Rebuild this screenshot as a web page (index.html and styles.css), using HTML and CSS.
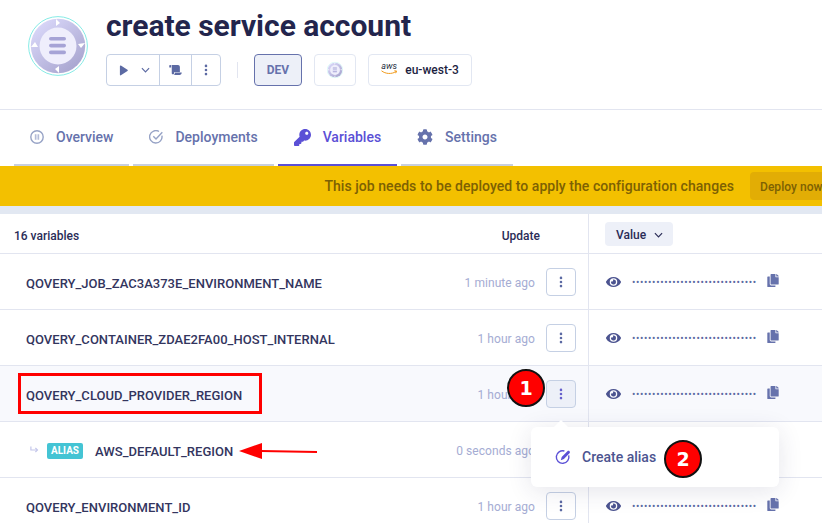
FILE: index.html
```html
<!DOCTYPE html>
<html lang="en">
<head>
  <meta charset="UTF-8">
  <meta name="viewport" content="width=device-width, initial-scale=1.0">
  <title>create service account</title>
  <link rel="stylesheet" href="styles.css">
</head>
<body>
  <svg class="defs" width="0" height="0" aria-hidden="true">
    <defs>
      <linearGradient id="ring" x1="0.15" y1="0.1" x2="0.85" y2="0.9">
        <stop offset="0" stop-color="#d8d6f8"/>
        <stop offset="1" stop-color="#a9a6d0"/>
      </linearGradient>
      <symbol id="logo" viewBox="0 0 60 60">
        <circle cx="30" cy="30" r="29.4" fill="#fff" stroke="#86ebe6" stroke-width="1"/>
        <circle cx="30" cy="30" r="27.2" fill="url(#ring)"/>
        <circle cx="30" cy="30" r="18.5" fill="#efeefc"/>
        <rect x="21" y="21" width="17" height="3.6" rx="1.8" fill="#a6a3d6"/>
        <rect x="21" y="27.8" width="17" height="3.6" rx="1.8" fill="#a6a3d6"/>
        <rect x="21" y="34.6" width="17" height="3.6" rx="1.8" fill="#a6a3d6"/>
        <path d="M28 3l4 4-4 3zM57 27l-4 5-3-4zM31 57l-4-4 4-3zM3 31l4-5 3 5z" fill="#fff"/>
      </symbol>
      <symbol id="key" viewBox="0 0 512 512"><path d="M512 176.001C512 273.203 433.202 352 336 352c-11.22 0-22.19-1.062-32.827-3.069l-24.012 27.014A23.999 23.999 0 0 1 261.223 384H224v40c0 13.255-10.745 24-24 24h-40v40c0 13.255-10.745 24-24 24H24c-13.255 0-24-10.745-24-24v-78.059c0-6.365 2.529-12.47 7.029-16.971l161.802-161.802C163.108 213.814 160 195.271 160 176 160 78.798 238.797.001 335.999 0 433.488-.001 512 78.511 512 176.001zM336 128c0 26.51 21.49 48 48 48s48-21.49 48-48-21.49-48-48-48-48 21.49-48 48z"/></symbol>
      <symbol id="cog" viewBox="0 0 512 512"><path d="M487.4 315.7l-42.6-24.6c4.3-23.2 4.3-47 0-70.2l42.6-24.6c4.9-2.8 7.1-8.6 5.5-14-11.1-35.6-30-67.8-54.7-94.6-3.8-4.1-10-5.1-14.8-2.3L380.8 110c-17.9-15.4-38.5-27.3-60.8-35.1V25.8c0-5.6-3.9-10.5-9.4-11.7-36.7-8.2-74.3-7.8-109.2 0-5.5 1.2-9.4 6.1-9.4 11.7V75c-22.2 7.9-42.8 19.8-60.8 35.1L88.7 85.5c-4.9-2.8-11-1.9-14.8 2.3-24.7 26.7-43.6 58.9-54.7 94.6-1.7 5.4.6 11.2 5.5 14L67.3 221c-4.3 23.2-4.3 47 0 70.2l-42.6 24.6c-4.9 2.8-7.1 8.6-5.5 14 11.1 35.6 30 67.8 54.7 94.6 3.8 4.1 10 5.1 14.8 2.3l42.6-24.6c17.9 15.4 38.5 27.3 60.8 35.1v49.2c0 5.6 3.9 10.5 9.4 11.7 36.7 8.2 74.3 7.8 109.2 0 5.5-1.2 9.4-6.1 9.4-11.7v-49.2c22.2-7.9 42.8-19.8 60.8-35.1l42.6 24.6c4.9 2.8 11 1.9 14.8-2.3 24.7-26.7 43.6-58.9 54.7-94.6 1.5-5.5-.7-11.3-5.6-14.1zM256 336c-44.1 0-80-35.9-80-80s35.9-80 80-80 80 35.9 80 80-35.9 80-80 80z"/></symbol>
      <symbol id="copy" viewBox="0 0 448 512"><path d="M320 448v40c0 13.255-10.745 24-24 24H24c-13.255 0-24-10.745-24-24V120c0-13.255 10.745-24 24-24h72v296c0 30.879 25.121 56 56 56h168zm0-344V0H152c-13.255 0-24 10.745-24 24v368c0 13.255 10.745 24 24 24h272c13.255 0 24-10.745 24-24V128H344c-13.2 0-24-10.8-24-24zm120.971-31.029L375.029 7.029A24 24 0 0 0 358.059 0H352v96h96v-6.059a24 24 0 0 0-7.029-16.97z"/></symbol>
      <symbol id="eye" viewBox="0 0 576 512"><path d="M572.52 241.4C518.29 135.59 410.93 64 288 64S57.68 135.64 3.48 241.41a32.35 32.35 0 0 0 0 29.19C57.71 376.41 165.07 448 288 448s230.32-71.64 284.52-177.41a32.35 32.35 0 0 0 0-29.19zM288 400a144 144 0 1 1 144-144 143.93 143.93 0 0 1-144 144zm0-240a95.31 95.31 0 0 0-25.31 3.79 47.85 47.85 0 0 1-66.9 66.9A95.78 95.78 0 1 0 288 160z"/></symbol>
      <symbol id="scroll" viewBox="0 0 640 512"><path d="M48 0C21.53 0 0 21.53 0 48v64c0 8.84 7.16 16 16 16h80V48C96 21.53 74.47 0 48 0zm208 412.57V352h288V96c0-52.94-43.06-96-96-96H111.59C121.74 13.41 128 29.92 128 48v368c0 38.87 34.65 69.65 74.84 63.12C234.44 474 256 444.46 256 412.57zM288 384v32c0 52.94-43.06 96-96 96h336c61.86 0 112-50.14 112-112 0-8.84-7.16-16-16-16H288z"/></symbol>
      <symbol id="kebab" viewBox="0 0 4 14">
        <circle cx="2" cy="2.200" r="1.500"/><circle cx="2" cy="7" r="1.500"/><circle cx="2" cy="11.800" r="1.500"/>
      </symbol>
    </defs>
  </svg>

  <div class="page">
    <header class="head">
      <svg class="logo"><use href="#logo"/></svg>
      <div class="head-main">
        <h1 class="title">create service account</h1>
        <div class="actions">
          <div class="btn-group">
            <span class="btn-cell cell-run">
              <svg class="ic-play" viewBox="0 0 10 12"><path d="M1 1.200c0-.6.6-1 1.100-.7l7.300 4.800c.5.300.5 1 0 1.300l-7.300 4.800c-.5.300-1.100-.1-1.100-.7z"/></svg>
              <svg class="ic-chev" viewBox="0 0 10 6"><path d="M1 1l4 4 4-4"/></svg>
            </span>
            <span class="btn-cell cell-log"><svg class="ic-scroll"><use href="#scroll"/></svg></span>
            <span class="btn-cell cell-more"><svg class="ic-kebab"><use href="#kebab"/></svg></span>
          </div>
          <span class="sep"></span>
          <span class="tag tag-dev">DEV</span>
          <span class="tag tag-status"><svg class="logo-small"><use href="#logo"/></svg></span>
          <span class="tag tag-region">
            <span class="aws">
              <span class="aws-word">aws</span>
              <svg class="aws-smile" viewBox="0 0 16 5"><path d="M.5 .8C4.500 4 10.500 4.400 15 1.600"/><path d="M13.300 .8l2.300 .2-.9 2.200"/></svg>
            </span>
            eu-west-3
          </span>
        </div>
      </div>
    </header>

    <nav class="tabs">
      <a class="tab">
        <svg class="tab-ic" viewBox="0 0 14 14"><circle cx="7" cy="7" r="6.200" fill="none" stroke="#97a3c6" stroke-width="1.400"/><path d="M4.800 4.300h1.700v5.400H4.800zM7.500 4.300h1.700v5.400H7.500z" fill="#b4bcd8"/></svg>
        Overview
      </a>
      <a class="tab">
        <svg class="tab-ic" viewBox="0 0 14 14"><path d="M12.900 5.600A6.200 6.200 0 1 1 10 1.500" fill="none" stroke="#97a3c6" stroke-width="1.400"/><path d="M4.300 6.300L7 9l6.300-6.800" fill="none" stroke="#97a3c6" stroke-width="1.400"/></svg>
        Deployments
      </a>
      <a class="tab tab-active">
        <svg class="tab-key"><use href="#key"/></svg>
        Variables
      </a>
      <a class="tab">
        <svg class="tab-cog"><use href="#cog"/></svg>
        Settings
      </a>
    </nav>

    <div class="banner">
      <span>This job needs to be deployed to apply the configuration changes</span>
      <span class="deploy">Deploy now</span>
    </div>
    <div class="band"></div>

    <section class="table">
      <div class="row row-head">
        <div class="cell-name">
          <span class="count">16 variables</span>
          <span class="update">Update</span>
        </div>
        <div class="cell-value">
          <span class="value-btn">Value <svg class="ic-chev" viewBox="0 0 10 6"><path d="M1 1l4 4 4-4"/></svg></span>
        </div>
      </div>

      <div class="row">
        <div class="cell-name">
          <span class="var">QOVERY_JOB_ZAC3A373E_ENVIRONMENT_NAME</span>
          <span class="time">1 minute ago</span>
          <span class="more"><svg class="ic-kebab"><use href="#kebab"/></svg></span>
        </div>
        <div class="cell-value">
          <svg class="ic-eye"><use href="#eye"/></svg>
          <span class="dots">•••••••••••••••••••••••••••••••</span>
          <svg class="ic-copy"><use href="#copy"/></svg>
        </div>
      </div>

      <div class="row">
        <div class="cell-name">
          <span class="var">QOVERY_CONTAINER_ZDAE2FA00_HOST_INTERNAL</span>
          <span class="time">1 hour ago</span>
          <span class="more"><svg class="ic-kebab"><use href="#kebab"/></svg></span>
        </div>
        <div class="cell-value">
          <svg class="ic-eye"><use href="#eye"/></svg>
          <span class="dots">•••••••••••••••••••••••••••••••</span>
          <svg class="ic-copy"><use href="#copy"/></svg>
        </div>
      </div>

      <div class="row row-hover">
        <div class="cell-name">
          <span class="var">QOVERY_CLOUD_PROVIDER_REGION</span>
          <span class="time">1 hour ago</span>
          <span class="more more-open"><svg class="ic-kebab"><use href="#kebab"/></svg></span>
        </div>
        <div class="cell-value">
          <svg class="ic-eye"><use href="#eye"/></svg>
          <span class="dots">•••••••••••••••••••••••••••••••</span>
          <svg class="ic-copy"><use href="#copy"/></svg>
        </div>
      </div>

      <div class="row">
        <div class="cell-name">
          <svg class="ic-sub" viewBox="0 0 10 8"><path d="M1 0v4h7"/><path d="M6 1.800L8.300 4 6 6.200"/></svg>
          <span class="alias">ALIAS</span>
          <span class="var">AWS_DEFAULT_REGION</span>
          <span class="time">0 seconds ago</span>
          <span class="more"><svg class="ic-kebab"><use href="#kebab"/></svg></span>
        </div>
        <div class="cell-value"></div>
      </div>

      <div class="row">
        <div class="cell-name">
          <span class="var">QOVERY_ENVIRONMENT_ID</span>
          <span class="time">1 hour ago</span>
          <span class="more"><svg class="ic-kebab"><use href="#kebab"/></svg></span>
        </div>
        <div class="cell-value">
          <svg class="ic-eye"><use href="#eye"/></svg>
          <span class="dots">•••••••••••••••••••••••••••••••</span>
          <svg class="ic-copy"><use href="#copy"/></svg>
        </div>
      </div>
    </section>

    <!-- dropdown from the row menu -->
    <div class="menu">
      <svg class="menu-ic" viewBox="0 0 16 16"><path d="M13.700 6.400A6.300 6.300 0 1 1 9.400 2" fill="none" stroke="#5b50d6" stroke-width="1.400"/><path d="M5.800 11.200l.9-3.300 5.700-5.700c.6-.6 1.500-.6 2.100 0s.6 1.500 0 2.100L8.900 10z" fill="#5b50d6"/></svg>
      Create alias
    </div>

    <!-- annotations drawn on top of the screenshot -->
    <div class="mark-box"></div>
    <svg class="mark-arrow" viewBox="0 0 80 18"><path d="M22 9L78 10" stroke="#f00" stroke-width="2" fill="none"/><path d="M0 9L23 1v16z" fill="#f00"/></svg>
    <span class="mark-num mark-1">1</span>
    <span class="mark-num mark-2">2</span>
  </div>
</body>
</html>
```

FILE: styles.css
```css
* {
  box-sizing: border-box;
}

html, body {
  margin: 0;
  height: 100%;
  overflow: hidden;
}

body {
  font-family: Roboto, "Liberation Sans", sans-serif;
  background: #fff;
  color: #2a2c57;
}

.defs {
  position: absolute;
}

.page {
  position: relative;
  width: 822px;
  height: 523px;
  overflow: hidden;
}

/* header */
.head {
  display: flex;
  height: 110px;
  padding: 16px 0 0 28px;
  border-bottom: 1px solid #e2e5f0;
}

.logo {
  width: 60px;
  height: 60px;
  flex-shrink: 0;
}

.head-main {
  margin: -8px 0 0 18px;
}

.title {
  margin: 0 0 10px;
  font-size: 30px;
  line-height: 36px;
  font-weight: 700;
  letter-spacing: -0.03px;
  color: #23254d;
}

.actions {
  display: flex;
  align-items: center;
}

.btn-group {
  display: flex;
  height: 32px;
  border: 1px solid #c5d0e4;
  border-radius: 4px;
}

.btn-cell {
  display: flex;
  align-items: center;
  justify-content: center;
  border-right: 1px solid #c5d0e4;
}

.btn-cell:last-child {
  border-right: 0;
}

.cell-run {
  width: 53px;
  gap: 13px;
  padding-left: 3px;
}

.cell-log {
  width: 32px;
}

.cell-more {
  width: 28px;
}

.ic-play {
  width: 9px;
  height: 11px;
  fill: #5c6aa3;
}

.ic-chev {
  width: 9px;
  height: 6px;
  fill: none;
  stroke: #5c6aa3;
  stroke-width: 1.300;
}

.ic-scroll {
  width: 13px;
  height: 10px;
  fill: #5c6aa3;
}

.ic-kebab {
  width: 4px;
  height: 12px;
  fill: #5c6aa3;
}

.sep {
  width: 1px;
  height: 16px;
  margin: 0 16px;
  background: #e2e5f0;
}

.tag {
  display: flex;
  align-items: center;
  justify-content: center;
  height: 32px;
  border: 1px solid #e2e7f2;
  border-radius: 4px;
  margin-right: 12px;
  font-size: 12px;
  font-weight: 500;
}

.tag-dev {
  width: 48px;
  border-color: #6672ac;
  background: #edf0f8;
  color: #6672ac;
  font-weight: 700;
}

.tag-status {
  width: 42px;
}

.logo-small {
  width: 16px;
  height: 16px;
}

.tag-region {
  width: 104px;
  gap: 8px;
  color: #1c1e3f;
}

.aws {
  display: flex;
  flex-direction: column;
  align-items: center;
  margin-top: -3px;
}

.aws-word {
  font-size: 9px;
  line-height: 8px;
  font-style: italic;
  font-weight: 400;
  color: #2b3346;
}

.aws-smile {
  width: 16px;
  height: 5px;
  fill: none;
  stroke: #f19a1a;
  stroke-width: 1;
}

/* tabs */
.tabs {
  display: flex;
  gap: 4px;
  height: 56px;
  padding-left: 14px;
}

.tab {
  display: flex;
  align-items: center;
  gap: 12px;
  padding: 0 16px;
  border-bottom: 2px solid #c8cfdf;
  font-size: 14px;
  font-weight: 500;
  color: #6672ac;
}

.tab-active {
  border-bottom-color: #5b50d6;
  color: #5b50d6;
}

.tab-ic {
  width: 14px;
  height: 14px;
}

.tab-key {
  width: 17px;
  height: 17px;
  fill: #5b50d6;
}

.tab-cog {
  width: 16px;
  height: 16px;
  fill: #6672ac;
}

/* banner */
.banner {
  display: flex;
  align-items: center;
  justify-content: flex-end;
  gap: 16px;
  height: 40px;
  background: #f3c000;
  font-size: 14px;
  font-weight: 500;
  letter-spacing: 0.05px;
  color: #7d6103;
}

.deploy {
  flex-shrink: 0;
  width: 84px;
  height: 28px;
  margin-right: -12px;
  padding-left: 10px;
  border-radius: 4px;
  background: #e2ad05;
  font-size: 12px;
  line-height: 30px;
}

.band {
  height: 8px;
  background: #e2e8f2;
}

/* table */
.row {
  display: grid;
  grid-template-columns: 589px 1fr;
  height: 56px;
  border-bottom: 1px solid #e2e5f0;
}

.row-head {
  height: 40px;
}

.row-hover {
  background: #f8f9fd;
}

.cell-name {
  display: flex;
  align-items: center;
  padding: 0 12px 0 26px;
  border-right: 1px solid #e2e5f0;
}

.cell-value {
  display: flex;
  align-items: center;
  padding-left: 17px;
}

.row-head .cell-name {
  padding: 4px 48px 0 14px;
  justify-content: space-between;
  font-size: 12px;
  font-weight: 500;
}

.row-head .cell-value {
  padding: 1px 0 0 16px;
}

.value-btn {
  display: flex;
  align-items: center;
  gap: 8px;
  width: 68px;
  height: 24px;
  padding: 1px 0 0 11px;
  border-radius: 4px;
  background: #edf0f8;
  font-size: 12px;
  font-weight: 500;
}

.value-btn .ic-chev {
  stroke: #2a2c57;
}

.var {
  margin-top: 3px;
  font-size: 13px;
  font-weight: 500;
  letter-spacing: 0.03px;
  color: #33355e;
}

.time {
  margin-left: auto;
  margin-right: 11px;
  margin-top: 2px;
  font-size: 12px;
  letter-spacing: 0.05px;
  color: #a5acd3;
}

.more {
  display: flex;
  align-items: center;
  justify-content: center;
  width: 30px;
  height: 28px;
  border: 1px solid #c5d0e4;
  border-radius: 4px;
  background: #fff;
}

.more-open {
  background: #edf0f8;
}

.more-open .ic-kebab {
  fill: #6660cc;
}

.ic-eye {
  width: 15px;
  height: 14px;
  fill: #4c5490;
}

.dots {
  width: 125px;
  margin: 2px 0 0 11px;
  white-space: nowrap;
  font-size: 10px;
  letter-spacing: 0.65px;
  color: #5c6aa3;
}

.ic-copy {
  width: 12px;
  height: 13px;
  margin: -2px 0 0 10px;
  fill: #6672ac;
}

.ic-sub {
  width: 9px;
  height: 8px;
  margin: 0 8px 0 4px;
  fill: none;
  stroke: #c3c6ea;
  stroke-width: 1.300;
}

.alias {
  width: 36px;
  height: 16px;
  margin: 2px 12px 0 0;
  border-radius: 2px;
  background: #44c4d4;
  color: #fff;
  font-size: 10px;
  font-weight: 700;
  line-height: 16px;
  text-align: center;
}

/* dropdown */
.menu {
  position: absolute;
  left: 531px;
  top: 427px;
  display: flex;
  align-items: center;
  gap: 11px;
  width: 248px;
  height: 60px;
  padding-left: 24px;
  border-radius: 6px;
  background: #fff;
  box-shadow: 0 4px 24px rgba(42, 44, 87, 0.12);
  font-size: 14px;
  font-weight: 500;
  color: #4c5490;
}

.menu::before {
  content: "";
  position: absolute;
  left: 23px;
  top: -7px;
  border: 7px solid transparent;
  border-top: 0;
  border-bottom-color: #fff;
}

.menu-ic {
  width: 16px;
  height: 16px;
}

/* annotations */
.mark-box {
  position: absolute;
  left: 18px;
  top: 373px;
  width: 244px;
  height: 41px;
  border: 3px solid #f00;
}

.mark-arrow {
  position: absolute;
  left: 239px;
  top: 442px;
  width: 80px;
  height: 18px;
}

.mark-num {
  position: absolute;
  width: 38px;
  height: 38px;
  border: 2px solid #111;
  border-radius: 50%;
  background: #f00;
  color: #fff;
  font-family: "DejaVu Sans", sans-serif;
  font-size: 19px;
  font-weight: 700;
  line-height: 34px;
  text-align: center;
}

.mark-1 {
  left: 507px;
  top: 369px;
}

.mark-2 {
  left: 664px;
  top: 440px;
}
```
